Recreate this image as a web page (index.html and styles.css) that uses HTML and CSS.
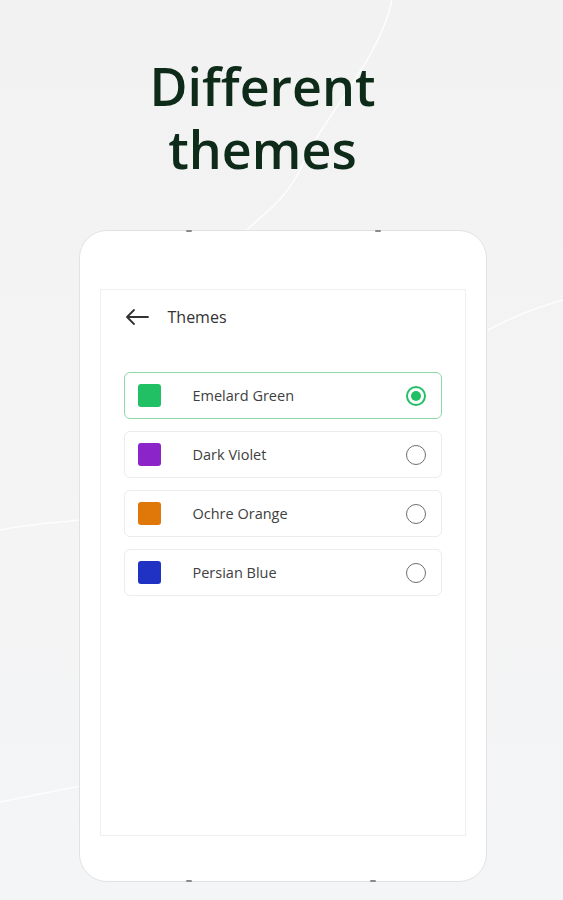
FILE: index.html
```html
<!DOCTYPE html>
<html lang="en">
<head>
<meta charset="utf-8">
<title>Different themes</title>
<link rel="stylesheet" href="styles.css">
</head>
<body>
<div class="page">
  <svg class="bg-lines" width="563" height="900" viewBox="0 0 563 900" aria-hidden="true">
    <path d="M392 0 C 380 60, 320 120, 300 170 C 280 210, 250 220, 240 240" fill="none" stroke="#ffffff" stroke-width="1.5" opacity="0.85"/>
    <path d="M0 530 C 20 525, 60 522, 80 520" fill="none" stroke="#ffffff" stroke-width="1.5" opacity="0.8"/>
    <path d="M0 802 C 30 796, 60 790, 80 786" fill="none" stroke="#ffffff" stroke-width="1.5" opacity="0.8"/>
    <path d="M488 330 C 510 318, 535 308, 563 300" fill="none" stroke="#ffffff" stroke-width="1.5" opacity="0.8"/>
  </svg>
  <h1 class="title">Different<br>themes</h1>
  <div class="tablet">
    <span class="dot dot-tl"></span>
    <span class="dot dot-tr"></span>
    <span class="dot dot-bl"></span>
    <span class="dot dot-br"></span>
    <div class="screen">
      <div class="header">
        <svg class="back" width="24" height="18" viewBox="0 0 24 18">
          <path d="M23 9 H2 M9 2 L2 9 L9 16" fill="none" stroke="#333" stroke-width="1.8" stroke-linecap="round" stroke-linejoin="round"/>
        </svg>
        <span class="header-title">Themes</span>
      </div>
      <ul class="list">
        <li class="item selected">
          <span class="swatch green"></span>
          <span class="name">Emelard Green</span>
          <span class="radio on"></span>
        </li>
        <li class="item">
          <span class="swatch violet"></span>
          <span class="name">Dark Violet</span>
          <span class="radio"></span>
        </li>
        <li class="item">
          <span class="swatch orange"></span>
          <span class="name">Ochre Orange</span>
          <span class="radio"></span>
        </li>
        <li class="item">
          <span class="swatch blue"></span>
          <span class="name">Persian Blue</span>
          <span class="radio"></span>
        </li>
      </ul>
    </div>
  </div>
</div>
</body>
</html>
```

FILE: styles.css
```css
* { box-sizing: border-box; }
html, body { margin: 0; padding: 0; }
body {
  width: 563px;
  height: 900px;
  overflow: hidden;
  background: #f3f3f4;
  font-family: "Open Sans", "Noto Sans", sans-serif;
}
.page {
  position: relative;
  width: 563px;
  height: 900px;
  display: flex;
  flex-direction: column;
  align-items: center;
  background: linear-gradient(180deg, #f2f2f3 0%, #f4f4f5 60%, #f4f5f6 100%);
}
.bg-lines {
  position: absolute;
  left: 0;
  top: 0;
}
.title {
  position: relative;
  margin: 54px 38px 0 0;
  font-size: 52px;
  line-height: 63px;
  font-weight: 600;
  color: #0e2a19;
  text-align: center;
}
.tablet {
  position: relative;
  margin-top: 50px;
  margin-left: 2px;
  width: 408px;
  height: 652px;
  background: #ffffff;
  border: 1px solid #e2e2e2;
  border-radius: 28px;
  padding: 58px 20px 45px 20px;
}
.dot {
  position: absolute;
  width: 6px;
  height: 2px;
  background: #8a8a8a;
  border-radius: 1px;
}
.dot-tl { left: 106px; top: -1px; }
.dot-tr { left: 295px; top: -1px; }
.dot-bl { left: 106px; bottom: -1px; }
.dot-br { left: 290px; bottom: -1px; }
.screen {
  width: 100%;
  height: 100%;
  border: 1px solid #efefef;
  background: #ffffff;
  padding: 0 23px;
}
.header {
  display: flex;
  align-items: center;
  height: 54px;
  padding-left: 1px;
}
.back { flex: none; }
.header-title {
  margin-left: 19px;
  font-size: 16px;
  color: #333333;
}
.list {
  list-style: none;
  margin: 28px 0 0;
  padding: 0;
  display: flex;
  flex-direction: column;
  gap: 12px;
}
.item {
  display: flex;
  align-items: center;
  height: 47px;
  border: 1px solid #ececec;
  border-radius: 6px;
  padding: 0 15px 0 13px;
  background: #fff;
}
.item.selected { border-color: #8fd9a9; }
.swatch {
  width: 23px;
  height: 23px;
  border-radius: 3px;
  flex: none;
}
.green { background: #22c064; }
.violet { background: #8b24c9; }
.orange { background: #e07709; }
.blue { background: #2032c4; }
.name {
  flex: 1;
  margin-left: 32px;
  font-size: 14.5px;
  color: #404040;
}
.radio {
  width: 20px;
  height: 20px;
  border: 1.6px solid #6f6f6f;
  border-radius: 50%;
  flex: none;
  position: relative;
}
.radio.on { border-color: #22c064; border-width: 2px; }
.radio.on::after {
  content: "";
  position: absolute;
  left: 3px;
  top: 3px;
  width: 10px;
  height: 10px;
  border-radius: 50%;
  background: #22c064;
}
```
